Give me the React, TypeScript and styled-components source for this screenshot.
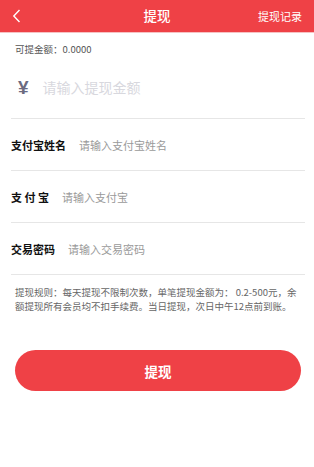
import React from "react";
import styled, { createGlobalStyle } from "styled-components";

const Global = createGlobalStyle`
  html, body { margin: 0; padding: 0; background: #fff; }
  body { font-family: "Noto Sans CJK SC", "Noto Sans", sans-serif; }
  * { box-sizing: border-box; }
`;

const RED = "#ef4146";

const Page = styled.div`
  width: 314px;
  min-height: 467px;
  background: #fff;
`;

const Header = styled.header`
  height: 33px;
  background: ${RED};
  border-bottom: 1px solid #f6c2c3;
  display: grid;
  grid-template-columns: 60px 1fr 60px;
  align-items: center;
  color: #fff;
`;

const Back = styled.button`
  border: 0;
  background: none;
  padding: 0 0 0 12px;
  display: flex;
  align-items: center;
  height: 100%;
  cursor: pointer;
`;

const Title = styled.h1`
  margin: 0;
  text-align: center;
  font-size: 13.5px;
  font-weight: 500;
  line-height: 1;
`;

const Record = styled.span`
  font-size: 11px;
  text-align: right;
  padding-right: 12px;
  white-space: nowrap;
`;

const Balance = styled.div`
  margin-top: 9px;
  padding-left: 15px;
  font-size: 9.5px;
  line-height: 14px;
  color: #555;
`;

const AmountRow = styled.div`
  height: 63px;
  margin: 0 9px 0 11px;
  border-bottom: 1px solid #e6e6e6;
  display: flex;
  align-items: center;
  gap: 14px;
  padding-left: 7px;
`;

const Yen = styled.span`
  font-family: "Liberation Sans", sans-serif;
  font-size: 19px;
  font-weight: 700;
  color: #6b6a80;
  line-height: 1;
`;

const AmountPlaceholder = styled.span`
  font-size: 14px;
  color: #d8d8de;
`;

const Row = styled.div`
  height: 52px;
  margin: 0 9px 0 11px;
  border-bottom: 1px solid #e6e6e6;
  display: flex;
  align-items: center;
  gap: 13px;
`;

const Label = styled.span`
  font-size: 11px;
  font-weight: 700;
  color: #111;
  white-space: pre;
`;

const Placeholder = styled.span`
  font-size: 11px;
  color: #9a9a9a;
`;

const Rules = styled.p`
  margin: 10px 12px 0 15px;
  font-size: 9.5px;
  line-height: 14px;
  color: #666;
`;

const Submit = styled.button`
  display: block;
  margin: 37px 0 0 15px;
  width: 286px;
  height: 41px;
  border: 0;
  border-radius: 21px;
  background: ${RED};
  color: #fff;
  font-family: inherit;
  font-size: 13.5px;
  font-weight: 700;
  cursor: pointer;
`;

const fields = [
  { label: "支付宝姓名", ph: "请输入支付宝姓名" },
  { label: "支 付 宝", ph: "请输入支付宝" },
  { label: "交易密码", ph: "请输入交易密码" },
];

export default function App() {
  return (
    <Page>
      <Global />
      <Header>
        <Back aria-label="back">
          <svg width="9" height="14" viewBox="0 0 9 14">
            <path d="M7.5 1 L1.8 7 L7.5 13" stroke="#fff" strokeWidth="1.4" fill="none" />
          </svg>
        </Back>
        <Title>提现</Title>
        <Record>提现记录</Record>
      </Header>
      <Balance>可提金额：0.0000</Balance>
      <AmountRow>
        <Yen>¥</Yen>
        <AmountPlaceholder>请输入提现金额</AmountPlaceholder>
      </AmountRow>
      {fields.map((f) => (
        <Row key={f.label}>
          <Label>{f.label}</Label>
          <Placeholder>{f.ph}</Placeholder>
        </Row>
      ))}
      <Rules>
        提现规则：每天提现不限制次数，单笔提现金额为： 0.2-500元，余额提现所有会员均不扣手续费。当日提现，次日中午12点前到账。
      </Rules>
      <Submit>提现</Submit>
    </Page>
  );
}
